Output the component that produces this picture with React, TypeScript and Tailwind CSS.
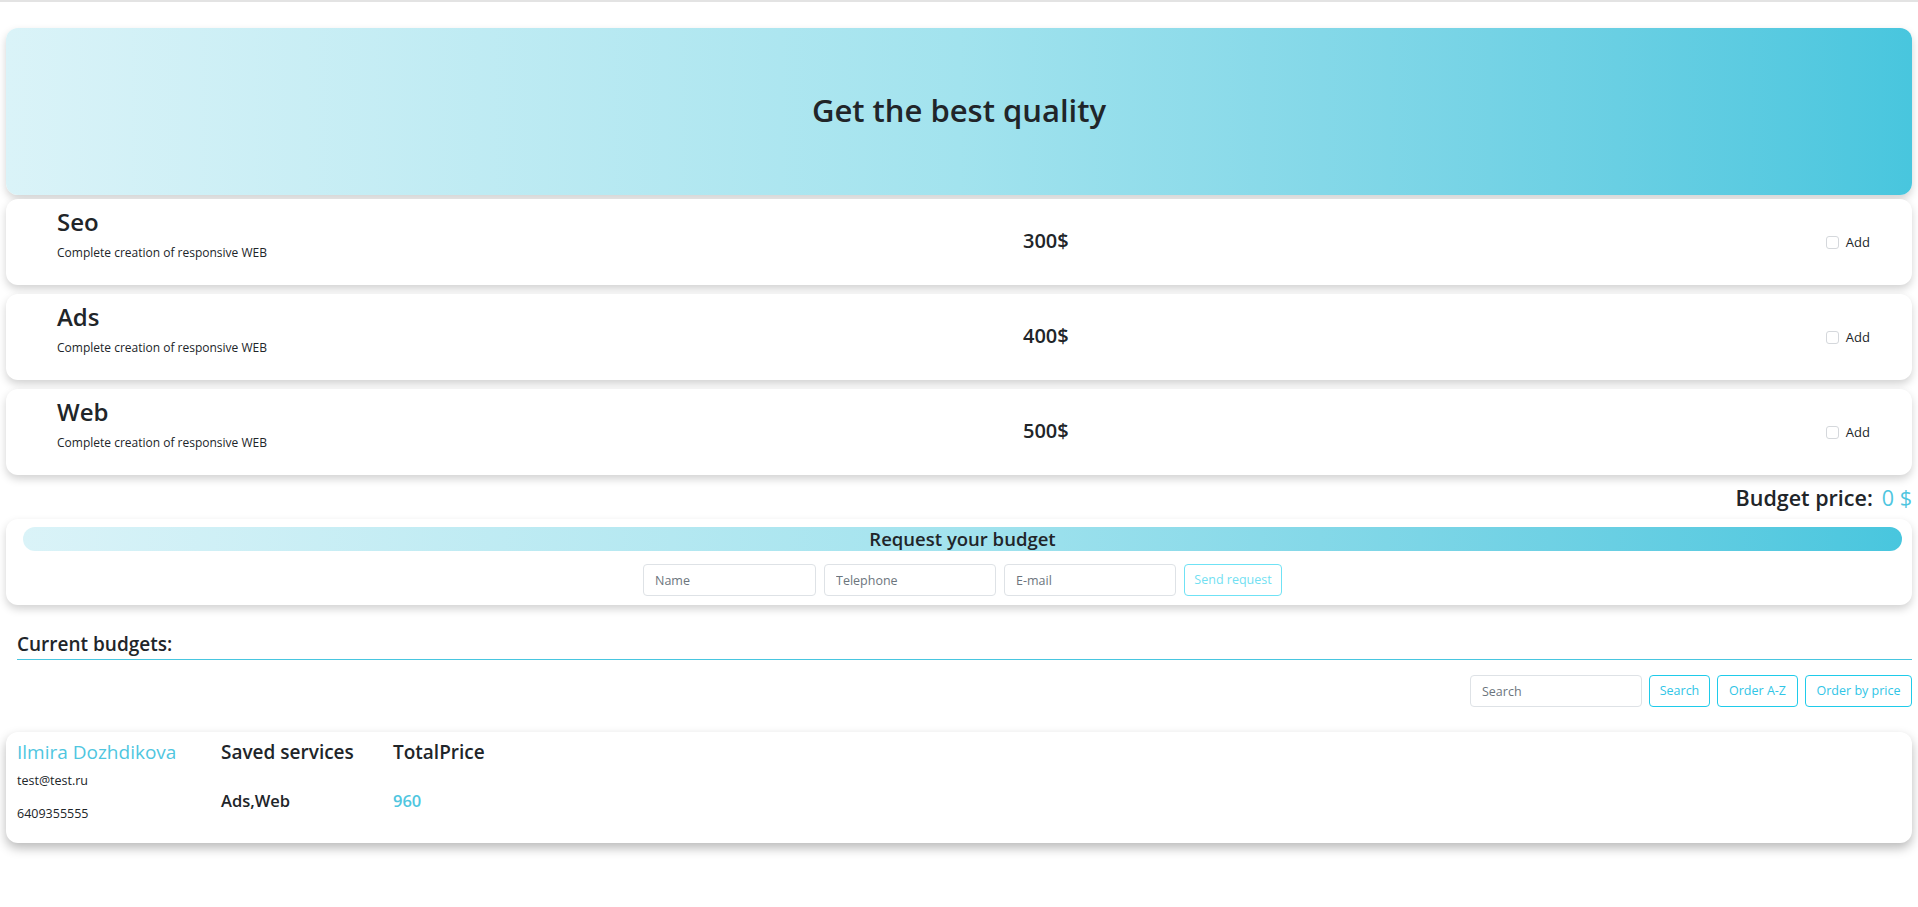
import React from 'react'

const services = [
  { name: 'Seo', price: '300$' },
  { name: 'Ads', price: '400$' },
  { name: 'Web', price: '500$' },
]

const font = { fontFamily: '"Open Sans", "Noto Sans", sans-serif' }

function ServiceCard({ name, price }: { name: string; price: string }) {
  return (
    <div className="mx-[6px] h-[86px] bg-white rounded-xl shadow-[0_4px_9px_rgba(0,0,0,0.18)] flex items-start pl-[51px] pr-[42px]">
      <div className="w-[966px] pt-[8px]">
        <h3 className="text-[24px] leading-[30px] font-semibold text-[#212529]">{name}</h3>
        <p className="text-[12px] leading-[16px] mt-[8px] text-[#212529]">Complete creation of responsive WEB</p>
      </div>
      <div className="pt-[29px] text-[20px] leading-[26px] font-semibold text-[#212529]">{price}</div>
      <label className="ml-auto pt-[34px] flex items-center gap-[7px] text-[13px] text-[#212529]">
        <input type="checkbox" className="appearance-none w-[13px] h-[13px] border border-[#d5d8dc] rounded-[3px] bg-white" />
        Add
      </label>
    </div>
  )
}

const inputCls = 'h-[32px] border border-[#dee2e6] rounded-[4px] px-[11px] text-[12.5px] placeholder-[#6c757d] outline-none'
const btnCls = 'h-[32px] border border-[#1fcbea] rounded-[4px] text-[12.5px] text-[#30c5e6]'

export default function App() {
  return (
    <div className="bg-white text-[#212529] border-t-2 border-[#e3e3e3] pb-[60px]" style={font}>
      {/* Hero */}
      <div className="mx-[6px] mt-[26px] h-[167px] rounded-xl bg-gradient-to-r from-[#daf3f8] via-[#a2e3ee] to-[#48c6de] shadow-[0_4px_9px_rgba(0,0,0,0.18)] flex items-center justify-center">
        <h1 className="text-[31px] font-semibold text-[#212529] -mt-[2px]">Get the best quality</h1>
      </div>

      {/* Services */}
      <div className="mt-[4px] flex flex-col gap-[9px]">
        {services.map(s => <ServiceCard key={s.name} {...s} />)}
      </div>

      {/* Budget price */}
      <div className="mt-[9px] mr-[6px] flex justify-end items-baseline gap-[9px] text-[21.5px] leading-[28px] font-semibold">
        <span>Budget price:</span>
        <span className="text-[#4fc6df] font-normal">0 $</span>
      </div>

      {/* Request form */}
      <div className="mx-[6px] mt-[7px] h-[86px] bg-white rounded-xl shadow-[0_4px_9px_rgba(0,0,0,0.18)] pt-[8px]">
        <div className="ml-[17px] mr-[10px] h-[24px] rounded-full bg-gradient-to-r from-[#daf3f8] via-[#a2e3ee] to-[#48c6de] flex items-center justify-center">
          <span className="text-[18.5px] font-semibold leading-[24px]">Request your budget</span>
        </div>
        <div className="mt-[13px] flex gap-[8px] pl-[637px]">
          <input placeholder="Name" className={`w-[173px] ${inputCls}`} />
          <input placeholder="Telephone" className={`w-[172px] ${inputCls}`} />
          <input placeholder="E-mail" className={`w-[172px] ${inputCls}`} />
          <button className="w-[98px] h-[32px] border border-[#6fe2f5] rounded-[4px] text-[12.5px] text-[#72dff2]">Send request</button>
        </div>
      </div>

      {/* Current budgets */}
      <div className="mt-[27px] ml-[17px] mr-[6px] pb-[3px]">
        <h4 className="text-[19px] leading-[24px] font-semibold">Current budgets:</h4>
      </div>
      <div className="ml-[17px] mr-[6px] h-px bg-[#48c6e0]" />

      <div className="mt-[15px] mr-[6px] flex justify-end gap-[7px]">
        <input placeholder="Search" className={`w-[172px] ${inputCls}`} />
        <button className={`w-[61px] ${btnCls}`}>Search</button>
        <button className={`w-[81px] ${btnCls}`}>Order A-Z</button>
        <button className={`w-[107px] ${btnCls}`}>Order by price</button>
      </div>

      {/* Budget list */}
      <div className="mx-[6px] mt-[25px] h-[111px] bg-white rounded-xl shadow-[0_5px_11px_rgba(0,0,0,0.28)] flex pl-[11px] pt-[8px]">
        <div className="w-[204px]">
          <div className="text-[19px] leading-[24px] text-[#4fc6df]">Ilmira Dozhdikova</div>
          <div className="text-[12.5px] leading-[16px] mt-[9px]">test@test.ru</div>
          <div className="text-[12.5px] leading-[16px] mt-[17px]">6409355555</div>
        </div>
        <div className="w-[172px]">
          <div className="text-[19px] leading-[24px] font-semibold">Saved services</div>
          <div className="text-[16.5px] leading-[22px] font-semibold mt-[26px]">Ads,Web</div>
        </div>
        <div>
          <div className="text-[19px] leading-[24px] font-semibold">TotalPrice</div>
          <div className="text-[16.5px] leading-[22px] font-semibold mt-[26px] text-[#4fc6df]">960</div>
        </div>
      </div>
    </div>
  )
}
